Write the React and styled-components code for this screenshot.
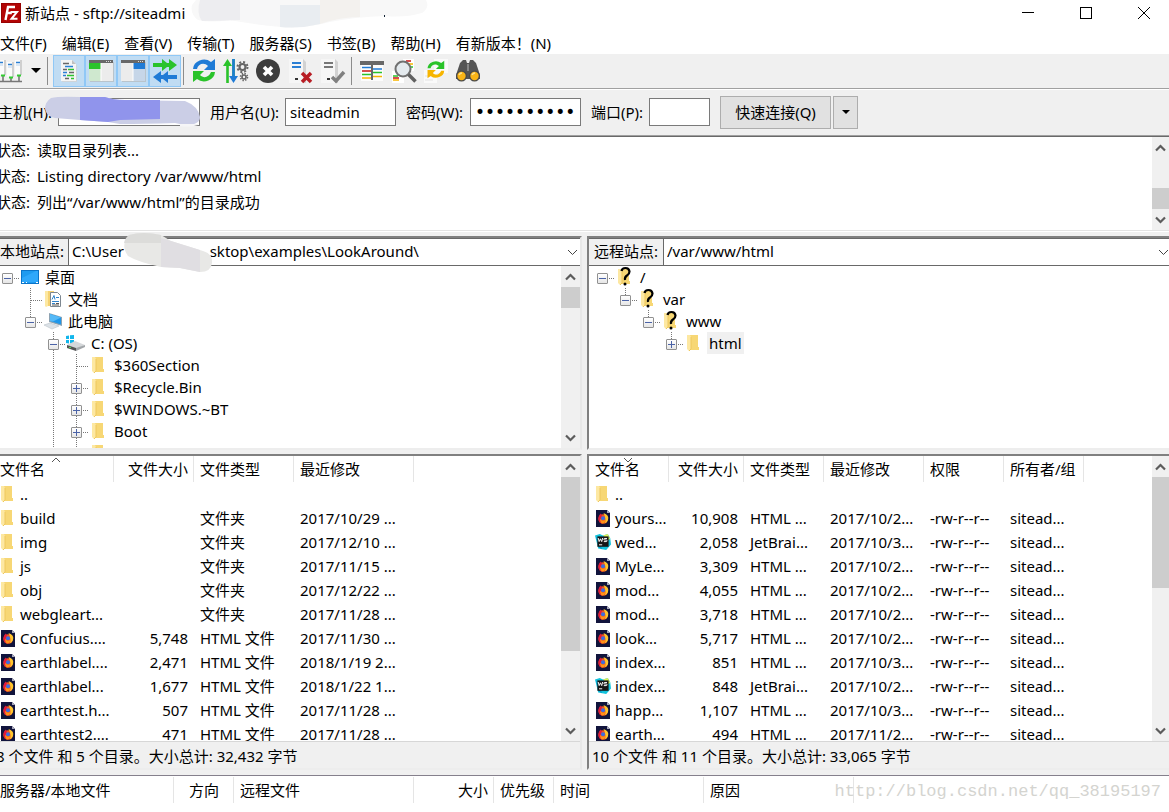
import React from "react";
import styled, { createGlobalStyle, css } from "styled-components";

const GlobalStyle = createGlobalStyle`
  *, *::before, *::after { box-sizing: border-box; }
  body { margin: 0; background: #f0f0f0; }
  body, button, input, select, table {
    font-family: "Noto Sans", "Noto Sans CJK SC", sans-serif;
    font-size: 15px;
    line-height: 22px;
    color: #000;
  }
  button { padding: 0; border: 0; background: none; }
`;

const Frame = styled.div`
  display: flex;
  flex-direction: column;
  height: 100vh;
  overflow: hidden;
  white-space: nowrap;
`;

/* ---------- title and menu ---------- */

const TitleBar = styled.header`
  position: relative;
  display: flex;
  align-items: center;
  height: 25px;
  padding-left: 1px;
  background: #fff;
`;

const Title = styled.h1`
  flex: 1;
  margin: 0 0 0 4px;
  font-size: 15px;
  font-weight: 400;
`;

const WindowButtons = styled.div`
  display: flex;
  gap: 8px;
`;

const WindowButton = styled.button`
  display: grid;
  place-items: center;
  width: 50px;
  height: 25px;
`;

const MenuBar = styled.nav`
  display: flex;
  gap: 15px;
  height: 29px;
  padding-top: 7px;
  background: #fff;
`;

const MenuItem = styled.button`
  display: block;
  height: 22px;
`;

const Scribble = styled.svg`
  position: absolute;
  left: ${(p) => p.$x}px;
  top: ${(p) => p.$y}px;
  z-index: 2;
  pointer-events: none;
`;

/* ---------- toolbar ---------- */

const ToolBar = styled.div`
  display: flex;
  align-items: center;
  height: 36px;
  padding-bottom: 2px;
  border-bottom: 1px solid #fff;
  background: #f0f0f0;
  box-shadow: inset 0 -1px #a0a0a0;
`;

const ToolButton = styled.button`
  display: grid;
  place-items: center;
  flex: none;
  width: ${(p) => p.$width || 32}px;
  height: 32px;
  ${(p) =>
    p.$pressed &&
    css`
      border: 1px solid #90c8f6;
      background: #c0dcf3;
    `}
`;

const ToolSeparator = styled.span`
  flex: none;
  width: 1px;
  height: 28px;
  margin: 0 ${(p) => p.$after ?? 4}px 0 ${(p) => p.$before ?? 2}px;
  background: #8c8c8c;
`;

/* ---------- quick connect ---------- */

const QuickBar = styled.form`
  position: relative;
  display: flex;
  align-items: center;
  gap: 10px;
  height: 45px;
  padding-bottom: 1px;
  background: #f0f0f0;
`;

const Field = styled.div`
  display: flex;
  align-items: center;
  gap: 5px;
  padding-bottom: 1px;
`;

const FieldLabel = styled.label`
  width: ${(p) => p.$width}px;
  text-indent: ${(p) => (p.$cut ? -2 : 0)}px;
`;

const TextInput = styled.input`
  width: ${(p) => p.$width}px;
  height: 28px;
  padding: 0 4px;
  border: 1px solid #7a7a7a;
  border-radius: 0;
  background: #fff;
  outline: 0;
  &[type="password"] {
    font-family: "DejaVu Sans", sans-serif;
    font-size: 17px;
  }
`;

const ConnectGroup = styled.div`
  display: flex;
  gap: 2px;
`;

const ConnectButton = styled.button`
  display: grid;
  place-items: center;
  width: ${(p) => p.$width}px;
  height: 33px;
  border: 1px solid #adadad;
  background: #e1e1e1;
`;

/* ---------- log ---------- */

const LogPanel = styled.section`
  display: flex;
  height: 97px;
  border-top: 1px solid #a0a0a0;
  border-bottom: 1px solid #fff;
  background: #fff;
  box-shadow: inset 0 1px #696969, inset 0 -1px #e3e3e3;
  padding: 1px 0;
`;

const LogLines = styled.dl`
  flex: 1;
  margin: 0;
`;

const LogLine = styled.div`
  display: flex;
  height: 26px;
  line-height: 26px;
  dt { width: 37px; text-indent: -4px; }
  dd { margin: 0; }
`;

/* ---------- scroll bar ---------- */

const Bar = styled.div`
  display: flex;
  flex: none;
  flex-direction: column;
  width: ${(p) => p.$width}px;
  background: #f0f0f0;
`;

const BarArrow = styled.button`
  display: grid;
  place-items: center;
  height: 21px;
`;

const BarTrack = styled.div`
  flex: 1;
  min-height: 0;
`;

const BarThumb = styled.div`
  height: ${(p) => p.$size}px;
  margin-top: ${(p) => p.$from}px;
  background: #cdcdcd;
`;

/* ---------- panes ---------- */

const Panes = styled.main`
  display: grid;
  grid-template-columns: minmax(0, 1fr) minmax(0, 1fr);
  gap: 5px;
  flex: 1;
  min-height: 0;
  padding: 4px 0 5px;
`;

const Pane = styled.section`
  position: relative;
  display: flex;
  flex-direction: column;
  gap: 4px;
  min-height: 0;
`;

const edges = css`
  border-style: solid;
  border-width: 2px ${(p) => (p.$side === "left" ? 2 : 0)}px 2px ${(p) => (p.$side === "left" ? 0 : 2)}px;
  border-color: #808080 #e8e8e8 #ededed #808080;
  background: #fff;
`;

const TreeBox = styled.div`
  ${edges}
  display: flex;
  flex-direction: column;
`;

const ListBox = styled.div`
  ${edges}
  display: flex;
  flex-direction: column;
  flex: 1;
  min-height: 0;
`;

const SiteBar = styled.div`
  position: relative;
  display: flex;
  height: 28px;
  border-top: 1px solid #696969;
  border-bottom: 1px solid #696969;
`;

const SiteLabel = styled.label`
  width: ${(p) => (p.$cut ? 69 : 75)}px;
  padding-left: ${(p) => (p.$cut ? 0 : 5)}px;
  border-right: 1px solid #696969;
  background: #f0f0f0;
  line-height: 24px;
`;

const SiteSelect = styled.select`
  flex: 1;
  min-width: 0;
  padding: 0 24px 2px 3px;
  border: 0;
  border-radius: 0;
  background: #fff;
  appearance: none;
  outline: 0;
`;

const SelectArrow = styled.svg`
  position: absolute;
  top: 10px;
  right: ${(p) => p.$right}px;
  pointer-events: none;
`;

const ScrollArea = styled.div`
  display: flex;
  min-height: 0;
  flex: ${(p) => (p.$grow ? 1 : "none")};
  height: ${(p) => (p.$grow ? "auto" : "182px")};
`;

const Viewport = styled.div`
  flex: 1;
  min-width: 0;
  overflow: hidden;
  padding-left: ${(p) => p.$pad || 0}px;
`;

/* ---------- tree ---------- */

const Tree = styled.ul`
  margin: 0;
  padding: 0;
  list-style: none;
`;

const TreeRow = styled.li`
  display: flex;
  height: 22px;
`;

const GuideCell = styled.span`
  position: relative;
  flex: none;
  width: ${(p) => (p.$last ? 20 : 23)}px;
  padding: 7px 0 0 2px;
  &::before {
    content: "";
    position: absolute;
    left: 7px;
    top: 0;
    width: 1px;
    height: ${(p) => ({ full: 22, half: 11, none: 0 })[p.$line]}px;
    background: repeating-linear-gradient(#777 0 1px, transparent 1px 2px);
  }
  &::after {
    content: "";
    position: absolute;
    left: 8px;
    top: 12px;
    width: ${(p) => (p.$last ? 11 : 0)}px;
    height: 1px;
    background: repeating-linear-gradient(90deg, #777 0 1px, transparent 1px 2px);
  }
`;

const Expander = styled.button`
  position: relative;
  z-index: 1;
  display: block;
  width: 11px;
  height: 11px;
  border: 1px solid #919191;
  border-radius: 1px;
  background:
    linear-gradient(#4b63a7, #4b63a7) 50% 50% / 7px 1px no-repeat,
    linear-gradient(#4b63a7, #4b63a7) 50% 50% / 1px ${(p) => (p.$open ? 0 : 7)}px no-repeat,
    linear-gradient(#fff, #e6e6e6);
`;

const TreeIcon = styled.span`
  display: grid;
  place-items: center;
  width: 20px;
  height: 22px;
`;

const TreeName = styled.span`
  margin-left: 3px;
  padding: 0 2px;
  background: ${(p) => (p.$selected ? "#f0f0f0" : "transparent")};
`;

/* ---------- tables ---------- */

const Table = styled.table`
  width: ${(p) => p.$width}px;
  border-spacing: 0;
  table-layout: fixed;
`;

const HeadCell = styled.th`
  position: relative;
  height: 26px;
  padding: 0 5px 0 ${(p) => (p.$pad === undefined ? 6 : p.$pad)}px;
  border-right: 1px solid #e5e5e5;
  font-weight: 400;
  text-align: ${(p) => p.$align || "left"};
`;

const SortMark = styled.svg`
  position: absolute;
  top: 1px;
  left: 50%;
  margin-left: -6px;
`;

const BodyCell = styled.td`
  height: 24px;
  padding: 0 6px;
  text-align: ${(p) => p.$align || "left"};
`;

const NameCell = styled(BodyCell)`
  padding: 0 0 0 ${(p) => p.$pad}px;
`;

const FileName = styled.span`
  display: flex;
  align-items: center;
  gap: 4px;
`;

const FileIcon = styled.span`
  display: flex;
  justify-content: center;
  width: 16px;
`;

const StatusLine = styled.footer`
  height: 27px;
  padding: 3px 0 0 ${(p) => (p.$cut ? 0 : 3)}px;
  border-top: 1px solid #d7d7d7;
  background: #f0f0f0;
  text-indent: ${(p) => (p.$cut ? -4 : 0)}px;
`;

const QueuePanel = styled.section`
  position: relative;
  height: 37px;
  padding-top: 1px;
  border-top: 1px solid #85808c;
  background: #fff;
`;

const Watermark = styled.span`
  position: absolute;
  right: 8px;
  top: 5px;
  color: #d4d4d0;
  font-family: "Liberation Mono", monospace;
  font-size: 17px;
`;

/* ---------- drawings ---------- */

const Logo = () => (
  <svg width="20" height="20" viewBox="0 0 20 20">
    <rect width="20" height="20" fill="#b30505" />
    <rect x=".5" y=".5" width="19" height="19" fill="none" stroke="#7d0000" strokeDasharray="1 1" />
    <path d="M4.5 17 7 4h7M5.8 10h5" fill="none" stroke="#fff" strokeWidth="2.4" />
    <path d="M9.5 9h6.5L10.5 15.8h6" fill="none" stroke="#fff" strokeWidth="2" />
  </svg>
);

const ServersIcon = () => (
  <svg width="24" height="28" viewBox="0 0 24 28">
    <path d="M0 3h4v15H0zM7 5h6v15H7zM15 3h6v15h-6z" fill="#fbfbfb" />
    <path d="M4 3h2v15H4zM12 5h2v15h-2zM20 3h2v15h-2z" fill="#cfcfcf" />
    <path d="M0 5.500h3M8 7.500h4M16 5.500h4" stroke="#2b7fd4" strokeWidth="1.600" />
    <path d="M0 8h3M8 10h4M16 8h4" stroke="#b9d3ee" />
    <path d="M3 19v5M11 21v3M19 19v5M0 24.500h22" fill="none" stroke="#777" strokeWidth="1.600" />
    <path d="M1 18.500h4M9 20.500h4M17 18.500h4" stroke="#3c3" strokeWidth="2" />
  </svg>
);

const DownTriangle = ({ size = 10 }) => (
  <svg width={size} height={size / 2} viewBox="0 0 10 5">
    <path d="M0 0h10L5 5z" />
  </svg>
);

const LogIcon = () => (
  <svg width="24" height="24" viewBox="0 0 24 24">
    <path d="M5 2h11l4 4v17H5z" fill="#cfd4d8" />
    <path d="M4 1h11l4 4v17H4z" fill="#f4f4f4" />
    <path d="M15 1v4h4z" fill="#c0c0c0" />
    <path d="M6 4.500h6M6 10.500h4M12 13.500h5M8 19.500h4" stroke="#666" strokeWidth="1.600" />
    <path d="M8 7.500h8M6 13.500h4M6 16.500h3" stroke="#2b7fd4" strokeWidth="1.600" />
    <path d="M11 10.500h6M10 16.500h7M14 19.500h3" stroke="#2fc42f" strokeWidth="1.600" />
  </svg>
);

const PaneIcon = ({ side }) => (
  <svg width="26" height="24" viewBox="0 0 26 24">
    <path d="M2 3h24v20H2z" fill="#b9c4cc" />
    <path d="M1 2h24v20H1z" fill="#ececec" />
    <path d="M1 1h24v3H1z" fill="#686868" />
    <path d="M18 2.500h1M20 2.500h1M22 2.500h1" stroke="#ddd" />
    {side === "local" ? (
      <>
        <path d="M1 4h12v6H1z" fill="#2ac32a" />
        <path d="M1 10h12v12H1z" fill="#cfe8cf" />
      </>
    ) : (
      <>
        <path d="M13 4h12v6H13z" fill="#1f7bd6" />
        <path d="M13 10h12v12H13z" fill="#c6d6e8" />
      </>
    )}
    <path d="M13 4v18" stroke="#fff" />
  </svg>
);

const QueueIcon = () => (
  <svg width="26" height="26" viewBox="0 0 26 26">
    <path d="M1 5h9V1l5 4h2V1l8 6-8 6V9h-2l-5 4V9H1z" fill="#2ac32a" />
    <path d="M25 17h-9v-4l-5 4H9v-4l-8 6 8 6v-4h2l5 4v-4h9z" fill="#1f7bd6" />
  </svg>
);

const RefreshIcon = ({ small }) => (
  <g transform={small ? "translate(5 3) scale(.76)" : undefined}>
    <path d="M2 11A11 10 0 0 1 20 4l4-3v11H13l4-4C13 4 7 6 6 11z" fill={small ? "#2ac32a" : "#1f7bd6"} />
    <path d="M24 14A11 10 0 0 1 6 21l-4 3V13h11l-4 4c4 4 9 2 11-3z" fill={small ? "#f7b500" : "#2ac32a"} />
  </g>
);

const FilterIcon = () => (
  <svg width="26" height="26" viewBox="0 0 26 26">
    <path d="M4.500 25V7M10.500 1v18" stroke="#2ac32a" strokeWidth="2.600" />
    <path d="M10.500 1v18" stroke="#1f7bd6" strokeWidth="2.600" />
    <path d="M0 8l4.500-7L9 8z" fill="#2ac32a" />
    <path d="M6 18l4.500 7 4.500-7z" fill="#1f7bd6" />
    <g fill="none" stroke="#666">
      <circle cx="19.500" cy="9" r="3" strokeWidth="2.200" />
      <circle cx="19.500" cy="9" r="5" strokeWidth="2" strokeDasharray="2 1.930" />
      <circle cx="21" cy="19" r="2" strokeWidth="1.600" />
      <circle cx="21" cy="19" r="3.500" strokeWidth="1.600" strokeDasharray="1.400 1.350" />
    </g>
  </svg>
);

const CancelIcon = () => (
  <svg width="26" height="26" viewBox="0 0 26 26">
    <circle cx="13" cy="13" r="12" fill="#3d3d3d" />
    <path d="m9 9 8 8m0-8-8 8" stroke="#fff" strokeWidth="3.600" />
  </svg>
);

const ServerIcon = ({ mark }) => (
  <svg width="28" height="26" viewBox="0 0 28 26">
    <path d="M17 1l3 3v21h-3z" fill="#d2d2d2" />
    <path d="M3 1h14v24H3z" fill="#f6f6f6" />
    <path d="M6 5h9M6 9h9" stroke={mark === "cross" ? "#2b7fd4" : "#777"} strokeWidth="2" />
    <path d="M9 21h3" stroke="#333" strokeWidth="2" />
    {mark === "cross" ? (
      <path d="m16 15 9 9m0-9-9 9" stroke="#b81d24" strokeWidth="3.500" />
    ) : (
      <path d="m14 19 4 4 8-9" fill="none" stroke="#808080" strokeWidth="3.500" />
    )}
  </svg>
);

const CompareIcon = () => (
  <svg width="26" height="24" viewBox="0 0 26 24">
    <path d="M2 3h22v19H2z" fill="#fcfcfc" />
    <path d="M1 2h24v4H1z" fill="#686868" />
    <path d="M3 8.500h9M14 10h9" stroke="#1f7bd6" strokeWidth="1.600" />
    <path d="M3 12h9" stroke="#c22" strokeWidth="1.600" />
    <path d="M3 15.500h9M14 13.500h9" stroke="#2ac32a" strokeWidth="1.600" />
    <path d="M3 19h9M14 17.500h9" stroke="#f7b500" strokeWidth="1.600" />
    <path d="M13 6v15" stroke="#686868" strokeWidth="2" />
  </svg>
);

const SearchIcon = () => (
  <svg width="26" height="26" viewBox="0 0 26 26">
    <path d="M12 1h11v12H12zM1 13h12v12H1z" fill="#fff" />
    <path d="M15 3h5" stroke="#c22" strokeWidth="1.600" />
    <path d="M18 6h4M2 22h6" stroke="#f7b500" strokeWidth="1.600" />
    <path d="M19 9h3M2 18h5" stroke="#2ac32a" strokeWidth="1.600" />
    <path d="M2 20h6" stroke="#c22" strokeWidth="1.600" />
    <circle cx="12" cy="11" r="7.500" fill="#e4eaee" stroke="#707070" strokeWidth="2" />
    <path d="m17.500 16.500 7 7" stroke="#606060" strokeWidth="3.600" />
  </svg>
);

const SyncIcon = () => (
  <svg width="26" height="26" viewBox="0 0 26 26">
    <path d="M11 1h14v14H11zM1 12h13v13H1z" fill="#fafafa" />
    <path d="M2 18h6M2 22h8" stroke="#e2e2e2" />
    <g transform="translate(-2 -1)">
      <RefreshIcon small />
    </g>
  </svg>
);

const BinocularsIcon = () => (
  <svg width="26" height="24" viewBox="0 0 26 24">
    <path d="M5 4 8 1h3l1 3h2l1-3h3l3 3 4 12v4H1v-4z" fill="#555" />
    <path d="M12 5h2v7h-2z" fill="#888" />
    <circle cx="6.500" cy="17" r="5.500" fill="#4a4a4a" />
    <circle cx="19.500" cy="17" r="5.500" fill="#4a4a4a" />
    <circle cx="6.500" cy="17" r="4.200" fill="#f9b416" />
    <circle cx="19.500" cy="17" r="4.200" fill="#f9b416" />
    <path d="M4 16q1-2 3-2M17 16q1-2 3-2" stroke="#ffe08a" strokeWidth="1.500" fill="none" />
  </svg>
);

const FolderIcon = ({ unknown }) => (
  <svg width="16" height="18" viewBox="0 0 16 18" overflow="visible">
    <path d="M3 1h9v12h1v3H3z" fill="#f7d775" />
    <path d="M1 1h3l1 2v12l-2 2-2-2z" fill="#fde8a2" />
    <path d="M5 3v12l-2 2" fill="none" stroke="#eec85e" />
    {unknown && (
      <>
        <path d="M4.500 3Q5 0 8.500 0T12.500 3.500Q12.500 6 10 7.500T8 12" fill="none" stroke="#000" strokeWidth="2.200" />
        <circle cx="8" cy="16" r="1.500" />
      </>
    )}
  </svg>
);

const DesktopIcon = () => (
  <svg width="18" height="14" viewBox="0 0 18 14">
    <rect x=".5" y=".5" width="17" height="13" fill="#1e9bf0" stroke="#0b74c9" />
    <path d="M1 12V8L15 1h2v11z" fill="#2fa8fb" />
    <path d="M1 12.500h2M5 12.500h1M15 12.500h2" stroke="#fff" />
  </svg>
);

const DocumentsIcon = () => (
  <svg width="18" height="18" viewBox="0 0 18 18">
    <path d="M1 1h9v15H1z" fill="#f5d272" />
    <path d="M1 1h3v15l-2 1-1-1z" fill="#fde8a2" />
    <path d="M6.500 2.500h7l3 3v11h-10z" fill="#fff" stroke="#7d8790" />
    <path d="M8 9.500l2-4 1 4M12 7.500h3M8 11.500h7M8 13.500h3" fill="none" stroke="#2f83cc" />
    <path d="M12 13.500h3M8 15h7" stroke="#555" />
  </svg>
);

const ComputerIcon = () => (
  <svg width="20" height="18" viewBox="0 0 20 18">
    <path d="M6 1l13 4v9L6 10z" fill="#8da2b2" />
    <path d="M7 2l11 3.500v7L7 9z" fill="#1f97ea" />
    <path d="M7 2l11 3.500-8 4L7 9z" fill="#55b9f7" />
    <path d="M1 13l6-2 9 3-7 3z" fill="#dce2e7" stroke="#bac3ca" strokeWidth=".6" />
  </svg>
);

const DriveIcon = () => (
  <svg width="20" height="18" viewBox="0 0 20 18">
    <path d="M0 2l3-.5V5H0zM4 1.300 8 1v4H4zM0 6h3v3.500L0 9zM4 6h4v4l-4-.500z" fill="#12b6ec" />
    <path d="M1 11l8-4 10 4-9 4z" fill="#d5d8da" />
    <path d="M1 11l9 3v3l-9-3z" fill="#555" />
    <path d="M10 14l9-3v2l-9 4z" fill="#a2a6a9" />
    <path d="M3 13.500h2" stroke="#5d5" />
  </svg>
);

const FirefoxIcon = () => (
  <svg width="14" height="17" viewBox="0 0 14 17">
    <path d="M0 0h11l3 3v14H0z" fill="#11143c" />
    <path d="M11 0v3h3z" fill="#aab" />
    <circle cx="7.200" cy="9" r="4.800" fill="#f4571d" />
    <path d="M2.400 9q0-4 2.500-5.500L6 6l-2 4 3 3.700Q3 13.500 2.400 9z" fill="#e3193c" />
    <path d="M7.500 3q6 2 4.500 7Q11 13 8.500 13.500 11 10 7.500 3z" fill="#ffc62e" />
    <circle cx="7" cy="8.300" r="2" fill="#3c6ee0" />
    <path d="M4 9q2 3 5.500 1-1 3.500-3 3.500T4 9z" fill="#ff9417" />
  </svg>
);

const WebStormIcon = () => (
  <svg width="20" height="20" viewBox="0 0 20 20">
    <path d="M0 2l6-2 4 2 6-2 3 5 1 8-6 7-10-2z" fill="#12c3dc" />
    <path d="M10 2l6-2 3 6-3 2z" fill="#dff05a" />
    <path d="M2 4l-1-1 4 14 4 2z" fill="#0799cb" />
    <rect x="3" y="3" width="14" height="13" fill="#161616" />
    <path d="M4 5l1.200 4.500L6.800 6l1.600 3.500L9.600 5" fill="none" stroke="#fff" strokeWidth="1.200" />
    <path d="M15 5.600H12.200Q11 5.600 11 6.600T12.200 7.500H14Q15 7.500 15 8.500T14 9.500H11" fill="none" stroke="#fff" strokeWidth="1.200" />
    <path d="M5 13.500h4" stroke="#fff" strokeWidth="1.200" />
  </svg>
);

const Chevron = ({ up }) => (
  <svg width="11" height="8" viewBox="0 0 11 8">
    <path d={up ? "M1 6.500 5.500 2 10 6.500" : "M1 1.500 5.500 6 10 1.500"} fill="none" stroke="#5c5c5c" strokeWidth="2.200" />
  </svg>
);

/* ---------- parts ---------- */

const ScrollBar = ({ width = 19, from, size }) => (
  <Bar $width={width}>
    <BarArrow type="button" aria-label="向上滚动"><Chevron up /></BarArrow>
    <BarTrack><BarThumb $from={from} $size={size} /></BarTrack>
    <BarArrow type="button" aria-label="向下滚动"><Chevron /></BarArrow>
  </Bar>
);

const icons = {
  folder: <FolderIcon />,
  unknown: <FolderIcon unknown />,
  desktop: <DesktopIcon />,
  documents: <DocumentsIcon />,
  computer: <ComputerIcon />,
  drive: <DriveIcon />,
  html: <FirefoxIcon />,
  ws: <WebStormIcon />,
};

/* Each row lists the guide line drawn in every column, the last one holding the expander. */
const localTree = [
  { name: "桌面", icon: "desktop", guides: ["none"], open: true },
  { name: "文档", icon: "documents", guides: ["none", "full"] },
  { name: "此电脑", icon: "computer", guides: ["none", "half"], open: true },
  { name: "C: (OS)", icon: "drive", guides: ["none", "none", "full"], open: true },
  { name: "$360Section", icon: "folder", guides: ["none", "none", "full", "full"] },
  { name: "$Recycle.Bin", icon: "folder", guides: ["none", "none", "full", "full"], open: false },
  { name: "$WINDOWS.~BT", icon: "folder", guides: ["none", "none", "full", "full"], open: false },
  { name: "Boot", icon: "folder", guides: ["none", "none", "full", "full"], open: false },
  { name: "Documents and Settings", icon: "folder", guides: ["none", "none", "full", "full"] },
];

const remoteTree = [
  { name: "/", icon: "unknown", guides: ["none"], open: true },
  { name: "var", icon: "unknown", guides: ["none", "half"], open: true },
  { name: "www", icon: "unknown", guides: ["none", "none", "half"], open: true },
  { name: "html", icon: "folder", guides: ["none", "none", "none", "half"], open: false, selected: true },
];

const TreeView = ({ rows }) => (
  <Tree>
    {rows.map((row) => (
      <TreeRow key={row.name}>
        {row.guides.map((line, i) => {
          const last = i === row.guides.length - 1;
          return (
            <GuideCell key={i} $line={line} $last={last}>
              {last && row.open !== undefined && (
                <Expander type="button" $open={row.open} aria-label={row.open ? "折叠" : "展开"} />
              )}
            </GuideCell>
          );
        })}
        <TreeIcon>{icons[row.icon]}</TreeIcon>
        <TreeName $selected={row.selected}>{row.name}</TreeName>
      </TreeRow>
    ))}
  </Tree>
);

const localColumns = [["文件名", 114], ["文件大小", 80, "right"], ["文件类型", 100], ["最近修改", 120]];
const remoteColumns = [["文件名", 80], ["文件大小", 75, "right"], ["文件类型", 80], ["最近修改", 100], ["权限", 80], ["所有者/组", 80]];
const queueColumns = [["服务器/本地文件", 174], ["方向", 60, "center"], ["远程文件", 180], ["大小", 80, "right"], ["优先级", 60], ["时间", 150], ["原因", 150]];

const localFiles = [
  ["folder", "..", "", "", ""],
  ["folder", "build", "", "文件夹", "2017/10/29 ..."],
  ["folder", "img", "", "文件夹", "2017/12/10 ..."],
  ["folder", "js", "", "文件夹", "2017/11/15 ..."],
  ["folder", "obj", "", "文件夹", "2017/12/22 ..."],
  ["folder", "webgleart...", "", "文件夹", "2017/11/28 ..."],
  ["html", "Confucius....", "5,748", "HTML 文件", "2017/11/30 ..."],
  ["html", "earthlabel....", "2,471", "HTML 文件", "2018/1/19 2..."],
  ["html", "earthlabel...", "1,677", "HTML 文件", "2018/1/22 1..."],
  ["html", "earthtest.h...", "507", "HTML 文件", "2017/11/28 ..."],
  ["html", "earthtest2....", "471", "HTML 文件", "2017/11/28 ..."],
];

const remoteRow = (icon, name, size, date) => [
  icon, name, size, icon === "ws" ? "JetBrai..." : "HTML ...", date, "-rw-r--r--", "sitead...",
];

const remoteFiles = [
  ["folder", "..", "", "", "", "", ""],
  remoteRow("html", "yours...", "10,908", "2017/10/2..."),
  remoteRow("ws", "wed...", "2,058", "2017/10/3..."),
  remoteRow("html", "MyLe...", "3,309", "2017/10/2..."),
  remoteRow("html", "mod...", "4,055", "2017/10/2..."),
  remoteRow("html", "mod...", "3,718", "2017/10/2..."),
  remoteRow("html", "look...", "5,717", "2017/10/2..."),
  remoteRow("html", "index...", "851", "2017/10/3..."),
  remoteRow("ws", "index...", "848", "2017/10/2..."),
  remoteRow("html", "happ...", "1,107", "2017/10/3..."),
  remoteRow("html", "earth...", "494", "2017/11/2..."),
];

const TableHead = ({ columns, sort, firstPad }) => (
  <>
    <colgroup>{columns.map(([name, width]) => <col key={name} width={width} />)}</colgroup>
    <thead>
      <tr>
        {columns.map(([name, , align], i) => (
          <HeadCell key={name} $align={align} $pad={i === 0 ? firstPad : undefined}>
            {i === 0 && sort && (
              <SortMark width="10" height="6" viewBox="0 0 10 6">
                <path d={sort === "up" ? "M1 5l4-4 4 4" : "M1 1l4 4 4-4"} fill="none" stroke="#555" />
              </SortMark>
            )}
            {name}
          </HeadCell>
        ))}
      </tr>
    </thead>
  </>
);

const total = (columns) => columns.reduce((sum, column) => sum + column[1], 0);

const FileTable = ({ columns, rows, sort, firstPad, iconPad }) => (
  <Table $width={total(columns)}>
    <TableHead columns={columns} sort={sort} firstPad={firstPad} />
    <tbody>
      {rows.map(([icon, name, ...cells], i) => (
        <tr key={i}>
          <NameCell $pad={iconPad}>
            <FileName><FileIcon>{icons[icon]}</FileIcon>{name}</FileName>
          </NameCell>
          {cells.map((text, j) => <BodyCell key={j} $align={columns[j + 1][2]}>{text}</BodyCell>)}
        </tr>
      ))}
    </tbody>
  </Table>
);

const Site = ({ id, label, path, cut }) => (
  <SiteBar>
    <SiteLabel htmlFor={id} $cut={cut}>{label}</SiteLabel>
    <SiteSelect id={id} defaultValue={path}><option>{path}</option></SiteSelect>
    <SelectArrow $right={cut ? 2 : 0} width="11" height="7" viewBox="0 0 11 7">
      <path d="M1 1l4.500 4.500L10 1" fill="none" stroke="#444" />
    </SelectArrow>
  </SiteBar>
);

const localPath = "C:\\User" + "\u00a0".repeat(22) + "sktop\\examples\\LookAround\\";
const menus = ["文件(F)", "编辑(E)", "查看(V)", "传输(T)", "服务器(S)", "书签(B)", "帮助(H)", "有新版本！(N)"];
const log = ["读取目录列表...", "Listing directory /var/www/html", "列出“/var/www/html”的目录成功"];

export default function App() {
  return (
    <Frame>
      <GlobalStyle />
      <TitleBar>
        <Logo />
        <Title>新站点 - sftp://siteadmi</Title>
        <WindowButtons>
          <WindowButton type="button" aria-label="最小化">
            <svg width="12" height="12"><path d="M0 5.500h12" stroke="#000" /></svg>
          </WindowButton>
          <WindowButton type="button" aria-label="最大化">
            <svg width="12" height="12"><rect x=".5" y=".5" width="11" height="11" fill="none" stroke="#000" /></svg>
          </WindowButton>
          <WindowButton type="button" aria-label="关闭">
            <svg width="12" height="12"><path d="M0 0l12 12M12 0 0 12" stroke="#000" /></svg>
          </WindowButton>
        </WindowButtons>
        <Scribble $x={190} $y={0} width="240" height="30" viewBox="0 0 240 30">
          <path d="M6 0H236Q240 8 232 13 215 18 195 16 165 17 140 22 115 29 90 27 60 24 40 20 20 23 8 20 0 14 2 5z" fill="#f8f8f8" />
          <path d="M10 0h40v20q-20 1-38 1-6-8-2-21z" fill="#ededf0" />
          <path d="M50 0h40v26Q65 25 50 20z" fill="#f7f7f8" />
          <path d="M90 5h40v19q-20 5-40 3z" fill="#e9edf1" />
          <path d="M130 0h40v17q-20 0-40 7z" fill="#f3f1ee" />
          <path d="M194 15h1v2h-1z" fill="#123" />
        </Scribble>
      </TitleBar>
      <MenuBar>
        {menus.map((name) => <MenuItem type="button" key={name}>{name}</MenuItem>)}
      </MenuBar>

      <ToolBar>
        <ToolButton type="button" $width={24} aria-label="站点管理器"><ServersIcon /></ToolButton>
        <ToolButton type="button" $width={23} aria-label="站点列表"><DownTriangle /></ToolButton>
        <ToolSeparator $before={0} $after={5} />
        <ToolButton type="button" $pressed aria-label="消息日志"><LogIcon /></ToolButton>
        <ToolButton type="button" $pressed aria-label="本地目录树"><PaneIcon side="local" /></ToolButton>
        <ToolButton type="button" $pressed aria-label="远程目录树"><PaneIcon side="remote" /></ToolButton>
        <ToolButton type="button" $pressed aria-label="传输队列"><QueueIcon /></ToolButton>
        <ToolSeparator />
        <ToolButton type="button" aria-label="刷新">
          <svg width="26" height="26" viewBox="0 0 26 26"><RefreshIcon /></svg>
        </ToolButton>
        <ToolButton type="button" aria-label="处理队列"><FilterIcon /></ToolButton>
        <ToolButton type="button" aria-label="取消"><CancelIcon /></ToolButton>
        <ToolButton type="button" aria-label="断开"><ServerIcon mark="cross" /></ToolButton>
        <ToolButton type="button" aria-label="重新连接"><ServerIcon mark="check" /></ToolButton>
        <ToolSeparator $before={3} />
        <ToolButton type="button" aria-label="过滤器"><CompareIcon /></ToolButton>
        <ToolButton type="button" aria-label="目录对比"><SearchIcon /></ToolButton>
        <ToolButton type="button" aria-label="同步浏览"><SyncIcon /></ToolButton>
        <ToolButton type="button" aria-label="查找文件"><BinocularsIcon /></ToolButton>
      </ToolBar>

      <QuickBar onSubmit={(event) => event.preventDefault()}>
        <Field>
          <FieldLabel htmlFor="host" $width={53} $cut>主机(H):</FieldLabel>
          <TextInput id="host" $width={142} />
        </Field>
        <Field>
          <FieldLabel htmlFor="user" $width={70}>用户名(U):</FieldLabel>
          <TextInput id="user" $width={111} defaultValue="siteadmin" />
        </Field>
        <Field>
          <FieldLabel htmlFor="pass" $width={59}>密码(W):</FieldLabel>
          <TextInput id="pass" type="password" $width={111} defaultValue="0123456789" />
        </Field>
        <Field>
          <FieldLabel htmlFor="port" $width={53}>端口(P):</FieldLabel>
          <TextInput id="port" $width={61} />
        </Field>
        <ConnectGroup>
          <ConnectButton type="submit" $width={111}>快速连接(Q)</ConnectButton>
          <ConnectButton type="button" $width={25} aria-label="连接历史"><DownTriangle size={8} /></ConnectButton>
        </ConnectGroup>
        <Scribble $x={45} $y={6} width="156" height="32" viewBox="0 0 156 32">
          <path d="M6 2Q14 0 35 1h25q10 3 15 3l65 1q13 5 15 16 0 8-15 8l-10-2q-30 1-55 1l-12-2-28-2-25-2Q2 21 0 13 0 6 6 2z" fill="#cbcee6" />
          <path d="M35 1h25q8 3 20 3h35v19l-40 1-12 2-28-2z" fill="#9094ec" />
          <path d="M135 28h18v1q-8 3-18 1z" fill="#f5f5f7" />
        </Scribble>
      </QuickBar>

      <LogPanel>
        <LogLines>
          {log.map((text) => <LogLine key={text}><dt>状态:</dt><dd>{text}</dd></LogLine>)}
        </LogLines>
        <ScrollBar width={17} from={30} size={21} />
      </LogPanel>

      <Panes>
        <Pane>
          <TreeBox $side="left">
            <Site id="local-site" label="本地站点:" path={localPath} cut />
            <ScrollArea>
              <Viewport><TreeView rows={localTree} /></Viewport>
              <ScrollBar from={0} size={21} />
            </ScrollArea>
          </TreeBox>
          <ListBox $side="left">
            <ScrollArea $grow>
              <Viewport>
                <FileTable columns={localColumns} rows={localFiles} sort="up" firstPad={0} iconPad={0} />
              </Viewport>
              <ScrollBar from={0} size={174} />
            </ScrollArea>
            <StatusLine $cut>8 个文件 和 5 个目录。大小总计: 32,432 字节</StatusLine>
          </ListBox>
          <Scribble $x={123} $y={-4} width="92" height="42" viewBox="0 0 92 42">
            <path d="M6 3Q20-1 38 3l10 6 32 10q10 3 9 12-1 9-12 9l-20-4-19-1Q15 30 5 24-3 13 6 3z" fill="#e8e8e6" />
            <path d="M6 3Q20-1 38 3v8H1Q2 6 6 3z" fill="#dcdcda" />
            <path d="M38 6l10 3 29 9v22l-20-4-19-1z" fill="#e0dee2" />
          </Scribble>
        </Pane>
        <Pane>
          <TreeBox $side="right">
            <Site id="remote-site" label="远程站点:" path="/var/www/html" />
            <ScrollArea>
              <Viewport $pad={6}><TreeView rows={remoteTree} /></Viewport>
            </ScrollArea>
          </TreeBox>
          <ListBox $side="right">
            <ScrollArea $grow>
              <Viewport>
                <FileTable columns={remoteColumns} rows={remoteFiles} sort="down" firstPad={6} iconPad={6} />
              </Viewport>
              <ScrollBar width={17} from={0} size={111} />
            </ScrollArea>
            <StatusLine>10 个文件 和 11 个目录。大小总计: 33,065 字节</StatusLine>
          </ListBox>
        </Pane>
      </Panes>

      <QueuePanel>
        <Table $width={total(queueColumns)}>
          <TableHead columns={queueColumns} firstPad={0} />
        </Table>
        <Watermark>http://blog.csdn.net/qq_38195197</Watermark>
      </QueuePanel>
    </Frame>
  );
}
